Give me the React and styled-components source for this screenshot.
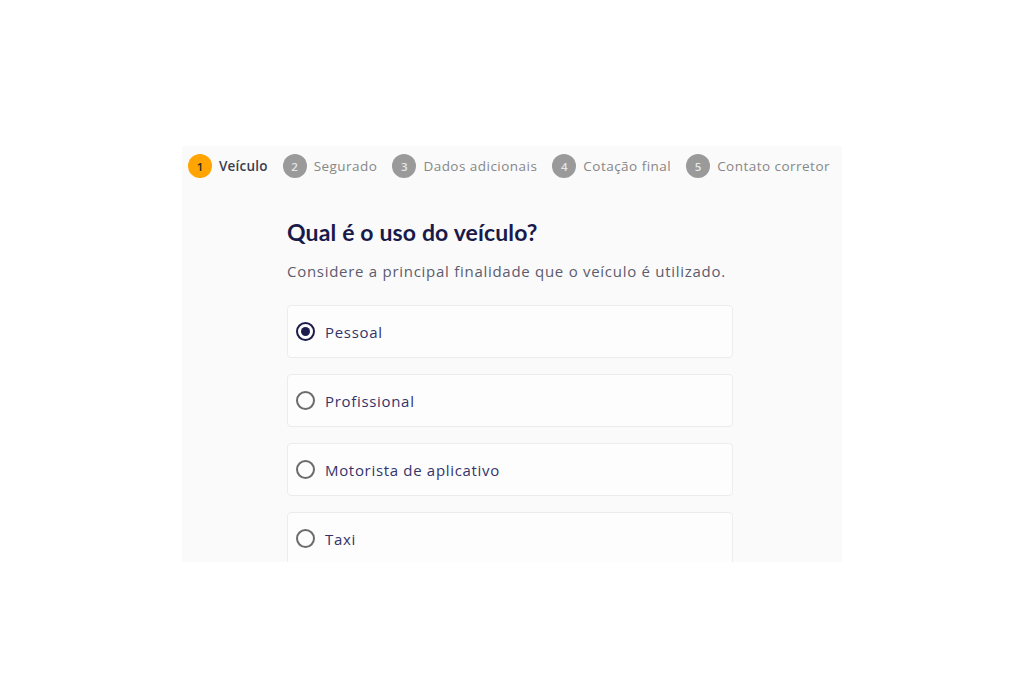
import React, { useState } from 'react';
import styled, { createGlobalStyle } from 'styled-components';

const GlobalStyle = createGlobalStyle`
  html, body {
    margin: 0;
    padding: 0;
    background: #ffffff;
  }
  body {
    font-family: "Open Sans", "Liberation Sans", sans-serif;
  }
`;

const Page = styled.div`
  width: 1024px;
  height: 683px;
  display: flex;
  justify-content: center;
  padding-top: 146px;
  box-sizing: border-box;
`;

const Panel = styled.div`
  width: 660px;
  height: 416px;
  background: #fafafa;
  overflow: hidden;
  box-sizing: border-box;
  padding: 8px 0 0 6px;
`;

const Stepper = styled.ol`
  list-style: none;
  margin: 0;
  padding: 0;
  display: flex;
  align-items: center;
  gap: 15px;
`;

const Step = styled.li`
  display: flex;
  align-items: center;
  gap: 7px;
  font-size: 13.5px;
  letter-spacing: ${p => (p.active ? '0.2px' : '0.47px')};
  color: ${p => (p.active ? '#3d3d4d' : '#878787')};
  font-weight: ${p => (p.active ? 600 : 400)};
`;

const StepNumber = styled.span`
  width: 24px;
  height: 24px;
  border-radius: 50%;
  display: flex;
  align-items: center;
  justify-content: center;
  font-size: 11.5px;
  font-weight: 600;
  letter-spacing: 0;
  background: ${p => (p.active ? '#ffa400' : '#9a9a9a')};
  color: ${p => (p.active ? '#2b2b2b' : '#e6e6e6')};
`;

const Content = styled.div`
  width: 446px;
  margin: 39px 0 0 99px;
`;

const Title = styled.h1`
  margin: 0;
  font-family: "Lato", "Liberation Sans", sans-serif;
  font-weight: 700;
  font-size: 23px;
  line-height: 30px;
  color: #191a4a;
  letter-spacing: 0.15px;
`;

const Subtitle = styled.p`
  margin: 14px 0 0;
  font-size: 15px;
  line-height: 20px;
  color: #5c5c6e;
  letter-spacing: 0.72px;
  white-space: nowrap;
`;

const Options = styled.div`
  margin-top: 24px;
  display: flex;
  flex-direction: column;
  gap: 16px;
`;

const Option = styled.label`
  height: 53px;
  box-sizing: border-box;
  background: #fdfdfd;
  border: 1px solid #ececec;
  border-radius: 4px;
  display: flex;
  align-items: center;
  padding: 0 0 0 8px;
  gap: 10px;
  cursor: pointer;
  font-size: 15px;
  letter-spacing: 0.68px;
  color: #34346a;
`;

const Radio = styled.span`
  width: 19px;
  height: 19px;
  box-sizing: border-box;
  border-radius: 50%;
  border: 2px solid ${p => (p.checked ? '#1b1b4d' : '#6b6b6b')};
  display: flex;
  align-items: center;
  justify-content: center;

  &::after {
    content: '';
    width: 9px;
    height: 9px;
    border-radius: 50%;
    background: ${p => (p.checked ? '#1b1b4d' : 'transparent')};
  }
`;

const steps = ['Veículo', 'Segurado', 'Dados adicionais', 'Cotação final', 'Contato corretor'];
const options = ['Pessoal', 'Profissional', 'Motorista de aplicativo', 'Taxi'];

export default function App() {
  const [selected, setSelected] = useState('Pessoal');

  return (
    <>
      <GlobalStyle />
      <Page>
        <Panel>
          <Stepper>
            {steps.map((s, i) => (
              <Step key={s} active={i === 0}>
                <StepNumber active={i === 0}>{i + 1}</StepNumber>
                {s}
              </Step>
            ))}
          </Stepper>
          <Content>
            <Title>Qual é o uso do veículo?</Title>
            <Subtitle>Considere a principal finalidade que o veículo é utilizado.</Subtitle>
            <Options>
              {options.map(o => (
                <Option key={o} onClick={() => setSelected(o)}>
                  <Radio checked={selected === o} />
                  {o}
                </Option>
              ))}
            </Options>
          </Content>
        </Panel>
      </Page>
    </>
  );
}
